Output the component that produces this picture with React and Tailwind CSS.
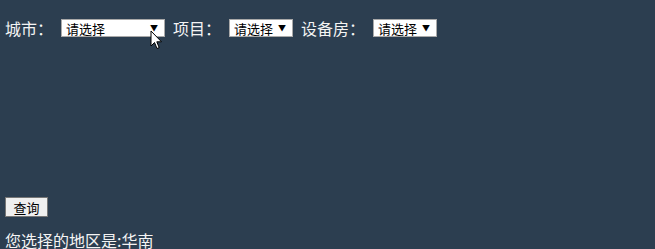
import React from 'react';

const font = { fontFamily: '"Noto Sans CJK SC", "Liberation Sans", sans-serif' };

const FakeSelect = ({ width }) => (
  <div className={`${width} h-[18px] bg-white border border-[#a9a9a9] flex items-center justify-between pl-[4px] pr-[6px] text-[13px] leading-none text-black`}>
    <span>请选择</span>
    <span className="text-[8px]">▼</span>
  </div>
);

const Cursor = () => (
  <svg className="absolute left-[150px] top-[30px]" width="13" height="21" viewBox="0 0 13 21">
    <path d="M1 1 L1 16 L4.5 12.5 L7 18.5 L9.2 17.6 L6.8 11.8 L11.5 11.8 Z" fill="#fff" stroke="#000" strokeWidth="1" strokeLinejoin="round" />
  </svg>
);

export default function App() {
  return (
    <div className="relative min-h-screen bg-[#2c3e50] text-[#f4f4f4] pl-[5px] pt-[19px]" style={font}>
      <div className="flex items-center h-[18px] text-[16px]">
        <span className="mr-[8px]">城市：</span>
        <FakeSelect width="w-[104px]" />
        <span className="ml-[8px] mr-[8px]">项目：</span>
        <FakeSelect width="w-[64px]" />
        <span className="ml-[8px] mr-[8px]">设备房：</span>
        <FakeSelect width="w-[64px]" />
      </div>
      <div className="h-[160px]"></div>
      <button className="w-[43px] h-[20px] bg-[#efefef] border border-[#767676] text-black text-[13px] leading-none flex items-center justify-center">
        查询
      </button>
      <div className="mt-[13px] text-[16px] leading-[20px]">您选择的地区是:华南</div>
      <Cursor />
    </div>
  );
}
